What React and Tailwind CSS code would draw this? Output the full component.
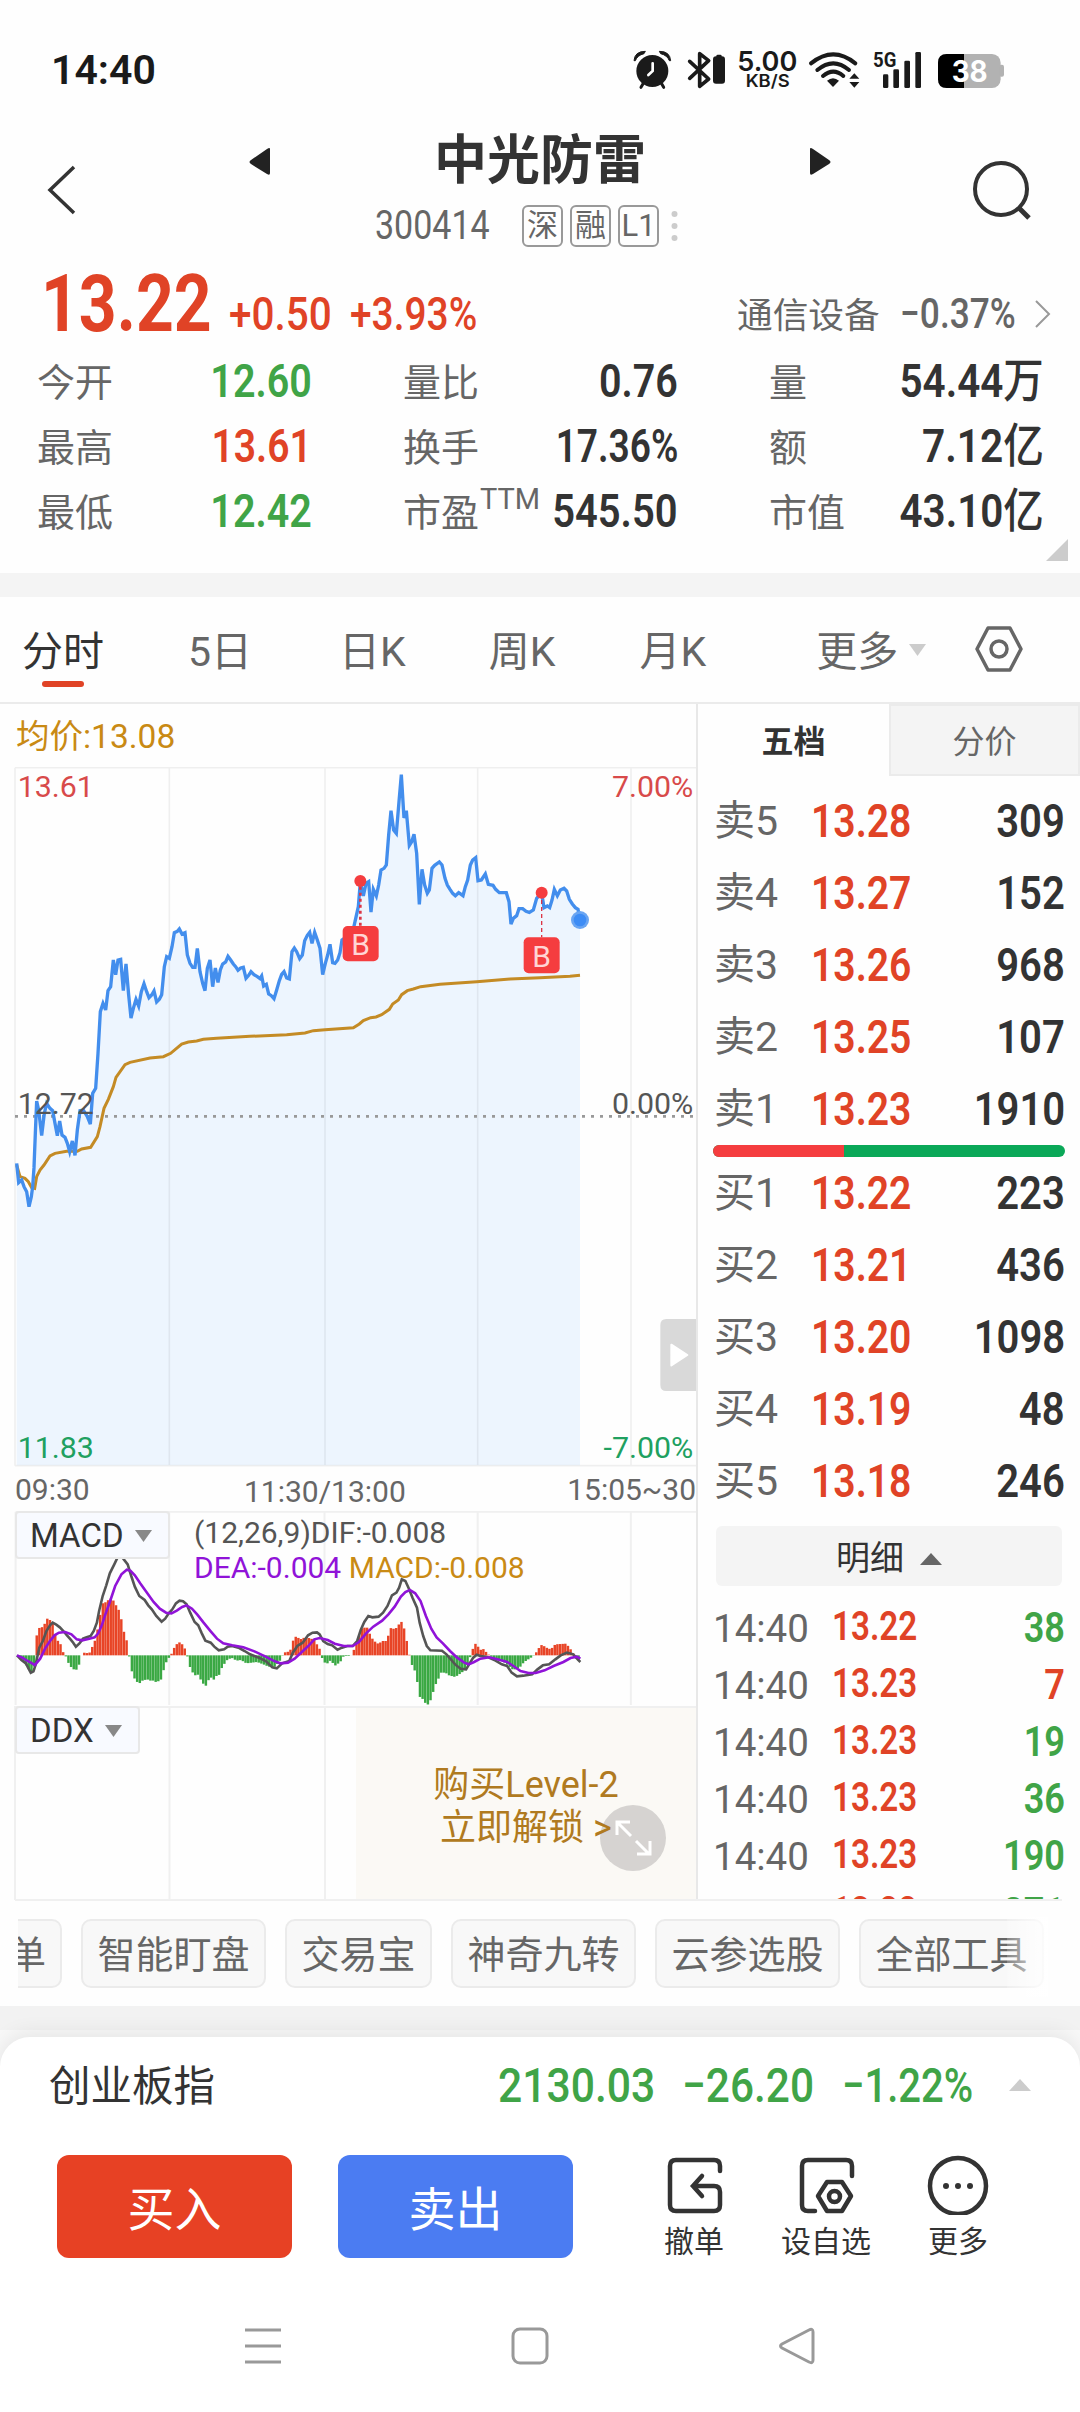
const stats = [
  [
    { label: "今开", value: "12.60", color: "text-[#40a447]", scale: "scale-x-[0.84]" },
    { label: "量比", value: "0.76", color: "text-[#333]", scale: "scale-x-[0.84]" },
    { label: "量", value: "54.44", unit: "万", color: "text-[#333]", scale: "scale-x-[0.86]" },
  ],
  [
    { label: "最高", value: "13.61", color: "text-[#e04326]", scale: "scale-x-[0.83]" },
    { label: "换手", value: "17.36%", color: "text-[#333]", scale: "scale-x-[0.79]" },
    { label: "额", value: "7.12", unit: "亿", color: "text-[#333]", scale: "scale-x-[0.865]" },
  ],
  [
    { label: "最低", value: "12.42", color: "text-[#40a447]", scale: "scale-x-[0.84]" },
    { label: "市盈", sup: "TTM", value: "545.50", color: "text-[#333]", scale: "scale-x-[0.85]" },
    { label: "市值", value: "43.10", unit: "亿", color: "text-[#333]", scale: "scale-x-[0.86]" },
  ],
];

const sells = [
  ["卖5", "13.28", "309"],
  ["卖4", "13.27", "152"],
  ["卖3", "13.26", "968"],
  ["卖2", "13.25", "107"],
  ["卖1", "13.23", "1910"],
];

const buys = [
  ["买1", "13.22", "223"],
  ["买2", "13.21", "436"],
  ["买3", "13.20", "1098"],
  ["买4", "13.19", "48"],
  ["买5", "13.18", "246"],
];

const trades = [
  ["14:40", "13.22", "38", "text-[#40a447]"],
  ["14:40", "13.23", "7", "text-[#e04326]"],
  ["14:40", "13.23", "19", "text-[#40a447]"],
  ["14:40", "13.23", "36", "text-[#40a447]"],
  ["14:40", "13.23", "190", "text-[#40a447]"],
  ["14:40", "13.22", "271", "text-[#40a447]"],
];

// chart units: 3 per pixel
const price =
  "50,1270 56,1328 65,1320 72,1340 80,1355 87,1400 94,1370 98,1340 102,1283 106,1180 110,1083 116,1110 125,1187 133,1120 140,1090 150,1105 158,1112 165,1150 172,1187 179,1143 186,1185 195,1192 202,1210 209,1235 217,1203 225,1246 232,1170 240,1112 250,1110 262,1130 271,1152 278,1060 287,1045 294,940 301,815 309,790 317,810 324,752 332,740 340,660 347,704 354,660 362,658 370,752 378,672 386,765 393,834 400,805 408,778 416,798 424,755 432,731 440,755 447,773 455,765 462,753 470,786 478,778 485,764 493,680 500,650 508,655 516,620 523,578 532,574 538,567 546,582 555,578 562,645 570,670 578,682 585,682 592,625 600,695 608,730 615,752 622,685 630,660 638,740 646,684 654,727 661,690 668,672 677,666 684,649 692,660 700,672 707,680 714,691 722,684 730,682 738,715 746,706 753,695 762,704 772,710 780,716 785,708 791,738 799,733 806,762 814,767 822,776 830,750 838,722 845,703 852,695 860,714 868,717 876,635 883,624 890,635 899,656 907,645 914,602 922,586 929,577 936,610 944,577 952,600 960,625 968,704 976,670 983,645 990,613 998,668 1005,670 1013,660 1020,638 1026,600 1040,590 1056,585 1065,545 1075,500 1081,425 1090,468 1098,430 1106,425 1113,516 1120,448 1129,468 1136,435 1143,390 1152,385 1159,375 1166,285 1173,212 1181,270 1189,280 1197,185 1204,104 1212,234 1219,212 1228,316 1235,305 1242,283 1250,340 1258,493 1266,388 1274,435 1282,460 1288,450 1296,385 1304,376 1318,366 1326,375 1335,415 1342,435 1350,448 1358,460 1366,467 1376,458 1389,467 1396,440 1403,420 1411,375 1418,360 1427,353 1434,422 1444,420 1456,402 1465,433 1479,436 1487,448 1498,458 1519,458 1527,485 1533,552 1540,535 1550,527 1557,506 1568,506 1578,514 1588,517 1600,510 1610,475 1625,458 1632,503 1642,498 1649,503 1656,480 1663,448 1672,467 1681,450 1692,445 1700,453 1708,478 1717,492 1726,503 1734,508 1740,540";

const average =
  "50,1275 60,1310 75,1315 85,1325 95,1343 104,1345 110,1310 120,1290 132,1275 150,1248 165,1240 200,1234 232,1234 245,1227 272,1222 292,1190 300,1160 312,1105 325,1078 340,1040 348,1012 375,974 390,967 450,954 490,950 512,940 545,912 565,906 590,903 610,898 650,895 750,889 860,884 915,879 940,872 975,869 1060,863 1078,852 1090,842 1112,833 1128,831 1145,824 1168,808 1178,792 1195,780 1205,764 1222,752 1240,747 1262,740 1320,733 1430,725 1530,717 1620,713 1710,709 1740,706";

const dif =
  "38,468 48,482 58,492 64,508 69,520 75,516 80,495 88,445 96,425 104,395 112,378 118,370 126,376 134,384 142,395 150,408 158,420 164,430 170,442 178,432 186,418 194,414 203,410 210,395 217,370 222,335 230,290 238,258 246,222 256,195 262,178 268,168 276,178 286,195 294,230 302,262 312,290 324,302 332,318 340,330 350,350 362,367 370,358 378,342 386,330 394,312 402,304 410,306 418,315 426,340 436,368 444,378 452,402 460,424 472,430 480,442 490,453 502,450 510,442 520,440 536,446 548,455 560,465 580,475 596,486 610,504 620,507 632,492 648,485 656,460 666,440 678,430 690,408 700,400 710,399 716,405 724,425 734,434 744,438 756,451 766,445 778,440 790,440 800,425 808,392 816,368 825,350 834,354 848,352 858,340 868,320 878,288 888,280 894,265 900,240 908,245 916,268 924,295 934,325 940,370 948,410 956,440 964,453 990,454 1000,465 1010,480 1020,496 1032,508 1044,510 1052,492 1060,475 1068,466 1076,470 1090,472 1110,484 1124,495 1136,500 1146,520 1158,531 1172,529 1192,525 1204,510 1216,498 1230,495 1244,480 1256,468 1270,460 1284,465 1294,480 1300,488";

const dea =
  "38,468 50,475 62,485 78,497 90,478 102,445 112,425 122,408 132,400 146,398 160,405 172,420 184,423 200,418 212,414 220,402 228,378 236,345 246,308 258,260 272,225 284,211 292,214 302,228 314,252 328,278 344,308 358,328 372,340 384,342 396,334 408,323 418,318 430,328 442,346 456,370 472,396 486,418 500,432 520,438 545,444 570,456 595,472 612,484 628,492 645,490 660,478 676,458 692,438 704,420 716,416 734,422 750,433 770,440 790,440 804,428 820,402 836,382 856,364 870,345 884,322 898,292 908,278 918,272 930,282 942,305 954,350 966,388 978,414 992,432 1008,455 1024,475 1040,490 1050,495 1062,488 1076,478 1096,474 1114,480 1136,488 1150,500 1166,515 1184,521 1200,521 1220,513 1240,500 1262,488 1278,476 1292,472 1300,478";

const histogram =
  "40,470 50,482 60,500 70,520 77,500 80,418 88,386 94,384 100,374 106,358 112,362 118,372 124,408 130,425 136,435 142,460 148,472 152,487 158,502 164,506 168,518 174,505 180,488 184,462 188,460 200,462 206,445 212,428 218,395 224,350 230,312 238,308 246,298 252,298 258,314 264,325 270,345 276,392 282,410 288,455 293,505 300,535 306,545 311,555 317,545 324,542 330,540 336,544 342,543 348,548 360,544 366,515 372,490 380,472 386,460 392,440 398,432 404,428 410,438 418,457 423,495 430,515 436,530 442,522 448,538 454,548 459,566 466,545 472,533 478,543 484,530 490,530 496,508 502,495 510,480 520,476 530,484 540,482 552,492 576,488 590,495 602,502 616,502 631,478 635,460 650,456 654,430 662,412 676,420 684,412 696,418 704,420 712,440 719,455 723,485 732,494 740,484 752,499 764,485 770,470 786,470 790,462 796,440 802,428 808,390 816,385 824,385 830,410 838,425 848,434 856,425 866,425 872,400 878,378 884,395 890,380 900,367 906,390 912,430 917,465 920,490 928,508 934,540 940,592 948,600 956,618 962,612 968,590 974,560 980,545 988,520 998,520 1006,528 1020,533 1032,522 1044,510 1052,480 1056,460 1064,432 1070,440 1076,452 1082,448 1094,465 1100,472 1112,480 1126,485 1140,500 1150,512 1164,505 1174,488 1186,478 1194,471 1200,462 1206,448 1214,436 1224,445 1234,450 1244,435 1268,433 1276,445 1284,462 1288,475 1300,488"
    .split(" ")
    .map((p) => p.split(",").map(Number));

const ZERO = 468;

const valueAt = (x) => {
  const i = histogram.findIndex((p) => p[0] >= x);
  if (i <= 0) return histogram[0][1];
  const [x0, y0] = histogram[i - 1];
  const [x1, y1] = histogram[i];
  return y0 + ((y1 - y0) * (x - x0)) / (x1 - x0);
};

const bars = Array.from({ length: 213 }, (_, i) => {
  const x = 41 + i * 5.92;
  return { x, y: valueAt(x) };
});

const StatusBar = () => {
  return (
    <div className="flex h-[120px] items-center pt-5 pl-[51px] text-[#1a1a1a]">
      <div className="w-[569px] text-[41px] leading-none font-semibold">
        14:40
      </div>
      <svg width="400" height="60" viewBox="0 0 1200 180" fill="#1a1a1a">
        <circle cx="97" cy="93" r="48" />
        <path d="M42 62Q44 34 76 34L72 41Q52 46 46 62ZM152 62Q150 34 118 34L122 41Q142 46 148 62Z" stroke="#1a1a1a" strokeWidth="3" />
        <path d="M70 130L63 142M124 130L131 142" stroke="#1a1a1a" strokeWidth="9" strokeLinecap="round" />
        <path d="M98 70V93L85 105" fill="none" stroke="#fff" strokeWidth="8" strokeLinecap="round" />
        <path d="M209 64L266 117L239 139V41L266 62L209 115" fill="none" stroke="#1a1a1a" strokeWidth="11" strokeLinejoin="round" strokeLinecap="round" />
        <rect x="279" y="49" width="36" height="82" rx="9" />
        <rect x="289" y="44" width="16" height="12" rx="4" />
        <text x="352" y="93" fontSize="80" fontWeight="600" textLength="180" lengthAdjust="spacingAndGlyphs" fontFamily="Inter, sans-serif">
          5.00
        </text>
        <text x="377" y="142" fontSize="51" fontWeight="600" textLength="132" lengthAdjust="spacingAndGlyphs" fontFamily="Inter, sans-serif">
          KB/S
        </text>
        <g fill="none" stroke="#1a1a1a" strokeWidth="12" strokeLinecap="round">
          <path d="M573 70Q640 16 706 70" />
          <path d="M592 90Q640 50 687 90" />
          <path d="M609 108Q640 82 670 108" />
        </g>
        <path d="M639 141L621 122Q639 107 657 122Z" />
        <path d="M703 100L718 116H688ZM703 143L718 126H688Z" />
        <text x="759" y="81" fontSize="62" fontWeight="700" textLength="70" lengthAdjust="spacingAndGlyphs">
          5G
        </text>
        <rect x="789" y="103" width="16" height="41" rx="4" />
        <rect x="820" y="88" width="17" height="56" rx="4" />
        <rect x="853" y="62" width="17" height="82" rx="4" />
        <rect x="886" y="36" width="17" height="108" rx="4" />
        <rect x="954" y="42" width="188" height="102" rx="26" fill="#b2b2b2" />
        <rect x="1138" y="74" width="14" height="36" rx="6" fill="#b2b2b2" />
        <path d="M1032 42H980Q954 42 954 68V118Q954 144 980 144H1032Z" fill="#000" />
        <text x="995" y="125" fontSize="88" fontWeight="700" fill="#fff" textLength="108" lengthAdjust="spacingAndGlyphs" fontFamily="Inter, sans-serif">
          38
        </text>
      </svg>
    </div>
  );
};

const Header = () => {
  return (
    <div className="flex h-[146px] pt-[9px] text-[#333]">
      <svg width="249" height="120" fill="none" stroke="#333" strokeWidth="3.5">
        <path d="M74 38L50 61L74 84" />
      </svg>
      <div className="w-[582px]">
        <div className="flex h-[64px] items-center justify-between">
          <svg width="21" height="28" viewBox="0 0 21 28" className="mt-0.5" fill="#222">
            <path d="M21 1V25Q21 28 18 26L2 16Q-1 14 2 12L18 1Q21 -1 21 1Z" />
          </svg>
          <div className="text-[53px] leading-[60px] font-bold">中光防雷</div>
          <svg width="21" height="28" viewBox="0 0 21 28" className="mt-0.5" fill="#222">
            <path d="M0 1V25Q0 28 3 26L19 16Q22 14 19 12L3 1Q0 -1 0 1Z" />
          </svg>
        </div>
        <div className="flex items-center pt-3 pl-[126px] text-[#666]">
          <div className="w-[147px]">
            <span className="inline-block origin-left scale-x-[0.85] text-[40px] leading-[42px]">
              300414
            </span>
          </div>
          <div className="flex gap-[7px] text-[31px] leading-[38px]">
            <span className="w-[41px] rounded-md border-2 border-[#999] text-center">
              <span className="-mx-2">深</span>
            </span>
            <span className="w-[41px] rounded-md border-2 border-[#999] text-center">
              <span className="-mx-2">融</span>
            </span>
            <span className="w-[41px] rounded-md border-2 border-[#999] text-center">
              L1
            </span>
          </div>
          <svg width="8" height="34" className="ml-3" fill="#ccc">
            <circle cx="3.5" cy="5" r="3" />
            <circle cx="3.5" cy="17" r="3" />
            <circle cx="3.5" cy="29" r="3" />
          </svg>
        </div>
      </div>
      <svg width="249" height="120" fill="none" stroke="#333" strokeWidth="4">
        <circle cx="170" cy="60" r="26" />
        <path d="M188 79L198 89" strokeWidth="5" />
      </svg>
    </div>
  );
};

const Quote = () => {
  return (
    <div className="flex h-[82px] pl-[41px] text-[#e04326]">
      <div className="w-[188px]">
        <span className="inline-block origin-left scale-x-[0.825] text-[80px] leading-[77px] font-bold">
          13.22
        </span>
      </div>
      <div className="w-[121px] pt-[18px]">
        <span className="inline-block origin-left scale-x-[0.88] text-[46px] leading-[60px] font-medium">
          +0.50
        </span>
      </div>
      <div className="w-[387px] pt-[18px]">
        <span className="inline-block origin-left scale-x-[0.845] text-[46px] leading-[60px] font-medium">
          +3.93%
        </span>
      </div>
      <div className="flex w-[320px] pt-[18px] text-[#666]">
        <div className="w-[163px] pt-0.5 text-[35.7px] leading-[60px]">
          通信设备
        </div>
        <div className="w-[134px]">
          <span className="inline-block origin-left scale-x-[0.84] text-[42px] leading-[60px] font-medium">
            −0.37%
          </span>
        </div>
        <svg width="18" height="60" fill="none" stroke="#999" strokeWidth="2">
          <path d="M2 17L15 30L2 43" />
        </svg>
      </div>
    </div>
  );
};

const Stats = () => {
  return (
    <div className="h-[225px] pl-[37px]">
      {stats.map((row, i) => (
        <div key={i} className="flex h-[65px] gap-[91px]">
          {row.map((item) => (
            <div key={item.label} className="flex w-[275px] justify-between">
              <div className="flex pt-[3px] text-[38px] leading-[65px] text-[#666]">
                {item.label}
                {item.sup && (
                  <span className="-mt-[14px] ml-px -mr-20 text-[29px]">
                    {item.sup}
                  </span>
                )}
              </div>
              <span
                className={`inline-block origin-right text-[47px] leading-[65px] font-semibold ${item.scale} ${item.color}`}
              >
                {item.value}
                {item.unit && (
                  <span className="font-medium">{item.unit}</span>
                )}
              </span>
            </div>
          ))}
        </div>
      ))}
      <div className="flex justify-end pr-3">
        <svg width="22" height="22" className="-mt-1 fill-[#ccc]">
          <path d="M22 0V22H0Z" />
        </svg>
      </div>
    </div>
  );
};

const PeriodTabs = () => {
  return (
    <div className="flex h-[107px] border-b-2 border-[#ebebeb] text-[41px] leading-[110px] text-[#666]">
      <div className="ml-[22px] flex w-[82px] flex-col items-center text-[#333]">
        <span className="h-[84px]">分时</span>
        <span className="h-[6px] w-[42px] rounded-full bg-[#e04326]" />
      </div>
      <span className="ml-[84px]">5日</span>
      <span className="ml-[87px]">日K</span>
      <span className="ml-[83px]">周K</span>
      <span className="ml-[84px]">月K</span>
      <span className="ml-[110px]">更多</span>
      <svg width="17" height="12" className="mt-[47px] ml-[11px] fill-[#ccc]">
        <path d="M0 0H17L8.500 12Z" />
      </svg>
      <svg width="50" height="50" className="mt-[27px] ml-[48px]" fill="none" stroke="#666" strokeWidth="3.500">
        <path d="M14 4H36L47 25L36 46H14L3 25Z" strokeLinejoin="round" />
        <circle cx="25" cy="25" r="8" />
      </svg>
    </div>
  );
};

const PriceChart = () => {
  return (
    <svg width="696" height="703" viewBox="0 81 2088 2109" fontFamily="Roboto, sans-serif">
      <polygon points={`50,2176 ${price} 1740,2176`} fill="#edf5fe" />
      <g stroke="#000" strokeOpacity="0.06" strokeWidth="5" fill="none">
        <path d="M45 83H2088M45 2177H2088M45 83V2177M508 83V2177M975 83V2177M1433 83V2177M1893 83V2177" />
      </g>
      <path d="M45 1129H2088" stroke="#999" strokeWidth="8" strokeDasharray="9 18" />
      <polyline points={average} fill="none" stroke="#c48b25" strokeWidth="9" />
      <polyline points={price} fill="none" stroke="#438eed" strokeWidth="10" />
      <path d="M1081 440V560" stroke="#dc3545" strokeWidth="8" strokeDasharray="9 9" />
      <path d="M1625 480V592" stroke="#dc3545" strokeWidth="4" strokeDasharray="12 9" />
      <circle cx="1081" cy="423" r="18" fill="#f53d3f" />
      <circle cx="1625" cy="458" r="18" fill="#f53d3f" />
      <rect x="1028" y="558" width="108" height="106" rx="15" fill="#f53d3f" />
      <rect x="1571" y="592" width="108" height="108" rx="15" fill="#f53d3f" />
      <g fontSize="90" fill="#ffd5d5" textAnchor="middle">
        <text x="1082" y="646">B</text>
        <text x="1625" y="680">B</text>
      </g>
      <circle cx="1740" cy="540" r="27" fill="#6aa5f2" />
      <circle cx="1740" cy="540" r="19" fill="#3d8cf5" />
      <g fontSize="91">
        <text x="53" y="170" fill="#d84a4a">13.61</text>
        <text x="53" y="1121" fill="#555">12.72</text>
        <text x="53" y="2153" fill="#20a060">11.83</text>
        <g textAnchor="end">
          <text x="2080" y="170" fill="#d84a4a">7.00%</text>
          <text x="2080" y="1121" fill="#555">0.00%</text>
          <text x="2080" y="2153" fill="#20a060">-7.00%</text>
        </g>
      </g>
      <path d="M2088 1737H1999Q1981 1737 1981 1755V1935Q1981 1953 1999 1953H2088Z" fill="#d9d9d9" />
      <path d="M2014 1814L2062 1845L2014 1876Z" fill="#fff" stroke="#fff" strokeWidth="6" strokeLinejoin="round" />
    </svg>
  );
};

const MacdChart = () => {
  return (
    <svg width="696" height="194" viewBox="0 35 1559 582" preserveAspectRatio="none">
      <path
        d="M35 37H1559M35 37V617M379 37V617M727 37V617M1070 37V617M1413 37V617"
        fill="none"
        stroke="#f0f0f0"
        strokeWidth="2"
        vectorEffect="non-scaling-stroke"
      />
      {bars.map((bar) => (
        <rect
          key={bar.x}
          x={bar.x - 2.9}
          y={Math.min(bar.y, ZERO)}
          width="5.5"
          height={Math.abs(bar.y - ZERO)}
          fill={bar.y < ZERO ? "#e84426" : "#3aa843"}
        />
      ))}
      <polyline points={dif} fill="none" stroke="#555" strokeWidth="2.6" vectorEffect="non-scaling-stroke" />
      <polyline points={dea} fill="none" stroke="#9013d8" strokeWidth="2.6" vectorEffect="non-scaling-stroke" />
    </svg>
  );
};

const IndicatorButton = ({ name, className }) => {
  return (
    <div
      className={`absolute top-0 left-[15px] flex h-[48px] items-center rounded-sm border-2 border-[#e8e8e8] bg-[#f8faff] pt-px pl-[13px] text-[33px] text-[#333] ${className}`}
    >
      {name}
      <svg width="17" height="12" className="ml-[11px] fill-[#888]">
        <path d="M0 0H17L8.500 12Z" />
      </svg>
    </div>
  );
};

const ChartPanel = () => {
  return (
    <div className="w-[698px] border-r-2 border-[#e8e8e8]">
      <div className="h-[63px] pl-[16px] text-[33.5px] leading-[66px] text-[#c98a14]">
        均价:13.08
      </div>
      <PriceChart />
      <div className="flex h-[41px] justify-between pl-[15px] text-[30px] leading-[39px] text-[#666]">
        <span className="w-[229px]">09:30</span>
        <span className="w-[262px] pt-0.5">11:30/13:00</span>
        <span className="w-[190px] text-right">15:05~30</span>
      </div>
      <div className="relative h-[195px]">
        <MacdChart />
        <div className="absolute top-1 left-[194px] text-[30px] leading-[35px] whitespace-nowrap text-[#555]">
          <div>(12,26,9)DIF:-0.008</div>
          <div className="text-[#9013d8]">
            DEA:-0.004 <span className="text-[#c98a14]">MACD:-0.008</span>
          </div>
        </div>
        <IndicatorButton name="MACD" className="w-[155px]" />
      </div>
      <div className="relative flex h-[195px] justify-end">
        <svg width="356" height="195" fill="none" stroke="#f0f0f0" strokeWidth="2">
          <path d="M15 1H356M15 194H356M15 0V194M169.500 0V194M325 0V194" />
        </svg>
        <div className="w-[340px] border-y-2 border-[#f0f0f0] bg-[#fbf9f5] pt-[56px] text-center text-[36px] leading-[43px] text-[#b07a20]">
          <div>购买Level-2</div>
          <div className="relative z-10">立即解锁 &gt;</div>
        </div>
        <svg width="66" height="66" className="absolute top-[99px] left-[600px]" fill="none" stroke="#fff" strokeWidth="3">
          <circle cx="33" cy="33" r="33" fill="#cfcdca" fillOpacity="0.85" stroke="none" />
          <path d="M31 31L18 18M17 30V17H30M36 36L49 49M50 36V49H37" />
        </svg>
        <IndicatorButton name="DDX" className="w-[125px]" />
      </div>
    </div>
  );
};

const Level = ({ row }) => {
  const [label, value, volume] = row;
  return (
    <div className="flex h-[72px] leading-[73px]">
      <span className="w-[98px] pl-px text-[41px] text-[#666]">{label}</span>
      <span className="w-[150px]">
        <span className="inline-block origin-left scale-x-[0.85] text-[46px] font-semibold text-[#e04326]">
          {value}
        </span>
      </span>
      <span className="ml-auto inline-block origin-right scale-x-[0.87] text-[46px] font-semibold text-[#333]">
        {volume}
      </span>
    </div>
  );
};

const OrderBook = () => {
  return (
    <div className="h-[1197px] w-[382px] overflow-hidden">
      <div className="flex h-[72px] text-[32px] leading-[76px]">
        <div className="w-[191px] text-center font-bold text-[#333]">五档</div>
        <div className="w-[191px] border-2 border-[#ebebeb] bg-[#f4f4f4] text-center leading-[72px] text-[#666]">
          分价
        </div>
      </div>
      <div className="pt-[9px] pr-[15px] pl-[15px]">
        {sells.map((row) => (
          <Level key={row[0]} row={row} />
        ))}
        <div className="flex h-[12px] overflow-hidden rounded-full bg-[#0aa858]">
          <div className="w-[131px] bg-[#f53d3f]" />
        </div>
        {buys.map((row) => (
          <Level key={row[0]} row={row} />
        ))}
      </div>
      <div className="mt-[9px] ml-[18px] flex h-[60px] w-[346px] items-center justify-center gap-4 rounded-md bg-[#f4f4f4] pt-[4px] text-[34px] text-[#333]">
        明细
        <svg width="22" height="12" className="mt-0.5 fill-[#666]">
          <path d="M11 0L22 12H0Z" />
        </svg>
      </div>
      <div className="pt-[13px] pr-[15px] pl-[15px]">
        {trades.map((row, i) => (
          <div key={i} className="flex h-[57px] leading-[57px]">
            <span className="w-[119px] pt-px text-[38.5px] text-[#666]">
              {row[0]}
            </span>
            <span className="-mt-px inline-block origin-left scale-x-[0.83] text-[40px] font-semibold text-[#e04326]">
              {row[1]}
            </span>
            <span
              className={`ml-auto inline-block origin-right scale-x-[0.86] text-[42px] font-semibold ${row[3]}`}
            >
              {row[2]}
            </span>
          </div>
        ))}
      </div>
    </div>
  );
};

const Chip = ({ children }) => {
  return (
    <span className="h-[69px] shrink-0 rounded-[10px] border-2 border-[#ebebeb] bg-[#f8f8f8] px-[14.500px] leading-[69px]">
      {children}
    </span>
  );
};

const Tools = () => {
  return (
    <div className="relative mx-[18px] flex h-[107px] gap-[19px] overflow-hidden border-t-2 border-[#f0f0f0] pt-[18px] text-[38px] whitespace-nowrap text-[#666]">
      <span className="flex h-[69px] w-[44px] shrink-0 justify-end overflow-hidden rounded-r-[10px] border-2 border-l-0 border-[#ebebeb] bg-[#f8f8f8] pr-[14px] leading-[69px]">
        单
      </span>
      <Chip>智能盯盘</Chip>
      <Chip>交易宝</Chip>
      <Chip>神奇九转</Chip>
      <Chip>云参选股</Chip>
      <Chip>全部工具</Chip>
      <div className="absolute top-4 right-[14px] h-[80px] w-[41px] bg-linear-to-r from-white/20 to-white/85" />
    </div>
  );
};

const IndexRow = () => {
  return (
    <div className="flex h-[98px] pl-[49px] text-[41.5px] leading-[100px] text-[#333]">
      <span className="w-[449px]">创业板指</span>
      <span className="w-[184px]">
        <span className="inline-block origin-left scale-x-[0.87] text-[49px] leading-[98px] font-medium text-[#40a447]">
          2130.03
        </span>
      </span>
      <span className="w-[160px]">
        <span className="inline-block origin-left scale-x-[0.865] text-[49px] leading-[98px] font-medium text-[#40a447]">
          −26.20
        </span>
      </span>
      <span className="w-[167px]">
        <span className="inline-block origin-left scale-x-[0.815] text-[49px] leading-[98px] font-medium text-[#40a447]">
          −1.22%
        </span>
      </span>
      <svg width="22" height="12" className="mt-[42px] fill-[#ccc]">
        <path d="M11 0L22 12H0Z" />
      </svg>
    </div>
  );
};

const Actions = () => {
  return (
    <div className="flex h-[126px] pt-[20px] pl-[57px] text-[30px] leading-[38px] text-[#333]">
      <div className="h-[103px] w-[235px] rounded-[12px] bg-[#e74124] text-center text-[47px] leading-[109px] text-white">
        买入
      </div>
      <div className="ml-[46px] h-[103px] w-[235px] rounded-[12px] bg-[#4b7cf2] text-center text-[47px] leading-[109px] text-white">
        卖出
      </div>
      <div className="ml-[56px] flex w-[130px] flex-col items-center">
        <svg width="60" height="64" className="mb-2" fill="none" stroke="#333" strokeWidth="4.500" strokeLinecap="round">
          <path d="M56 16V11Q56 5 50 5H12Q6 5 6 11V50Q6 56 12 56H50Q56 56 56 50V37Q56 31 50 31H30M38 21L29 31L38 41" />
        </svg>
        撤单
      </div>
      <div className="flex w-[134px] flex-col items-center">
        <svg width="60" height="64" className="mb-2" fill="none" stroke="#333" strokeWidth="4.500" strokeLinecap="round" strokeLinejoin="round">
          <path d="M56 21V11Q56 5 50 5H12Q6 5 6 11V50Q6 56 12 56H19" />
          <path d="M31 27H46L55 41L46 56H31L22 41Z" />
          <circle cx="38.500" cy="41.500" r="5.500" />
        </svg>
        设自选
      </div>
      <div className="flex w-[130px] flex-col items-center">
        <svg width="64" height="64" className="mb-2">
          <circle cx="32" cy="31" r="28" fill="none" stroke="#333" strokeWidth="4.500" />
          <circle cx="20" cy="31" r="3" fill="#333" />
          <circle cx="32" cy="31" r="3" fill="#333" />
          <circle cx="44" cy="31" r="3" fill="#333" />
        </svg>
        更多
      </div>
    </div>
  );
};

const SystemNav = () => {
  return (
    <div className="flex h-[152px] items-center justify-between pt-[18px] pr-[264px] pl-[244px]">
      <svg width="38" height="38" stroke="#999" strokeWidth="3">
        <path d="M1 3H37M1 19H37M1 35H37" />
      </svg>
      <svg width="38" height="38" fill="none" stroke="#999" strokeWidth="3">
        <rect x="2" y="2" width="34" height="34" rx="7" />
      </svg>
      <svg width="38" height="38" fill="none" stroke="#999" strokeWidth="3" strokeLinejoin="round">
        <path d="M35 5V33Q35 37 31 35L4 21Q1 19 4 17L31 3Q35 1 35 5Z" />
      </svg>
    </div>
  );
};

const App = () => {
  return (
    <div className="h-[2412px] w-[1080px] overflow-hidden bg-[#fefefe] font-['Roboto','Noto_Sans_CJK_SC',sans-serif]">
      <StatusBar />
      <Header />
      <Quote />
      <Stats />
      <div className="h-[24px] bg-[#f4f4f4]" />
      <PeriodTabs />
      <div className="flex h-[1195px]">
        <ChartPanel />
        <OrderBook />
      </div>
      <Tools />
      <div className="h-[24px] bg-[#f2f2f2]" />
      <div className="bg-[#f8f8f8] pt-[7px]">
        <div className="rounded-t-[30px] bg-white shadow-[0_-4px_20px_rgba(0,0,0,0.08)]">
          <IndexRow />
          <Actions />
          <SystemNav />
        </div>
      </div>
    </div>
  );
};

export default App;
